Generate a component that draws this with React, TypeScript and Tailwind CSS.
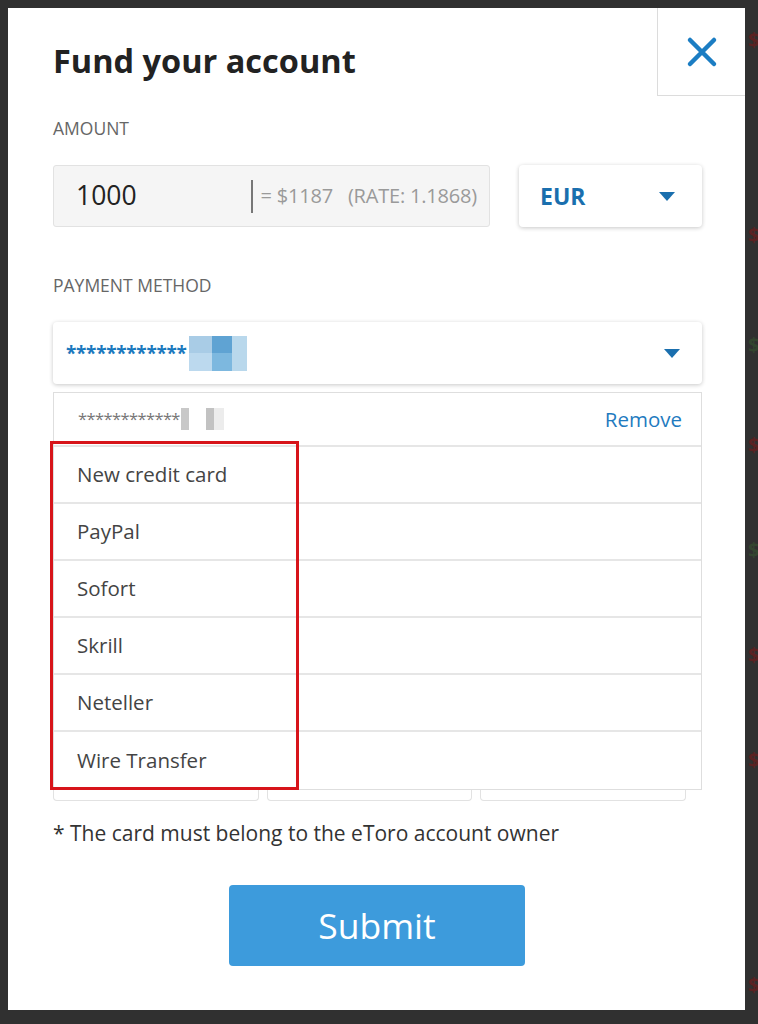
import React from "react";

const Caret = () => (
  <svg width="16" height="9" viewBox="0 0 16 9">
    <polygon points="0,0 16,0 8,9" fill="#1a6fae" />
  </svg>
);

const rows = ["New credit card", "PayPal", "Sofort", "Skrill", "Neteller", "Wire Transfer"];

const sideMarks = [
  { t: 30, c: "#5a2222" },
  { t: 225, c: "#5a2222" },
  { t: 335, c: "#33452f" },
  { t: 435, c: "#5a2222" },
  { t: 540, c: "#33452f" },
  { t: 645, c: "#5a2222" },
  { t: 750, c: "#5a2222" },
  { t: 975, c: "#5a2222" },
];

export default function App() {
  return (
    <div
      className="relative w-[758px] h-[1024px] bg-[#303030] overflow-hidden pt-[8px] pl-[8px]"
      style={{ fontFamily: '"Open Sans", "Noto Sans", sans-serif' }}
    >
      {sideMarks.map((m, i) => (
        <span
          key={i}
          className="absolute left-[748px] text-[20px] font-bold leading-none"
          style={{ top: m.t, color: m.c }}
        >
          $
        </span>
      ))}
      <div className="relative w-[737px] h-[1002px] bg-white pl-[45px] pt-[31px]">
        {/* close */}
        <div className="absolute right-0 top-0 w-[88px] h-[88px] border-l border-b border-[#dcdcdc] flex items-center justify-center">
          <svg width="32" height="32" viewBox="0 0 32 32">
            <path d="M4 4 L28 28 M28 4 L4 28" stroke="#1b7dc3" strokeWidth="4.5" strokeLinecap="round" />
          </svg>
        </div>

        <h1 className="text-[32.5px] leading-[44px] font-bold text-[#222]">Fund your account</h1>

        <div className="mt-[35px] text-[17.5px] leading-[20px] text-[#666]">AMOUNT</div>

        <div className="mt-[27px] flex w-[649px] gap-[29px]">
          <div className="w-[437px] h-[62px] bg-[#f5f5f5] border border-[#e2e2e2] rounded-[3px] flex items-center pl-[22px]">
            <span className="text-[26.5px] text-[#222] w-[175px]">1000</span>
            <span className="w-[1.5px] h-[33px] bg-[#777] mr-[8px]"></span>
            <span className="text-[20px] text-[#9a9a9a] whitespace-nowrap tracking-[-0.2px]">
              = $1187&nbsp;&nbsp;&nbsp;(RATE: 1.1868)
            </span>
          </div>
          <div className="w-[183px] h-[62px] bg-white rounded-[4px] shadow-[0_1px_4px_rgba(0,0,0,0.22)] flex items-center justify-between pl-[21px] pr-[27px]">
            <span className="text-[23px] font-bold text-[#1a6fae]">EUR</span>
            <Caret />
          </div>
        </div>

        <div className="mt-[48px] text-[17.5px] leading-[20px] text-[#666]">PAYMENT METHOD</div>

        <div className="mt-[27px] w-[649px] h-[62px] bg-white rounded-[4px] shadow-[0_1px_4px_rgba(0,0,0,0.22)] flex items-center justify-between pl-[13px] pr-[22px]">
          <div className="flex items-center">
            <span className="text-[19px] font-bold text-[#1a78bd] tracking-[-0.3px]">************</span>
            <div className="grid grid-cols-[40%_35%_25%] grid-rows-2 w-[58px] h-[35px] ml-[2px]">
              <div className="bg-[#a9cce6]"></div>
              <div className="bg-[#5fa3d3]"></div>
              <div className="bg-[#b9d8ec] row-span-2"></div>
              <div className="bg-[#bcd9ee]"></div>
              <div className="bg-[#7db8df]"></div>
            </div>
          </div>
          <Caret />
        </div>

        <div className="mt-[8px] w-[649px] border border-[#dedede] bg-white">
          <div className="h-[54px] flex items-center justify-between pl-[24px] pr-[19px] border-b-2 border-[#e6e6e6]">
            <div className="flex items-center">
              <span className="text-[16.5px] text-[#777] tracking-[-0.6px]">************</span>
              <div className="w-[8px] h-[22px] bg-[#c8c8c8] ml-[1px]"></div>
              <div className="w-[8px] h-[22px] bg-[#c2c2c2] ml-[17px]"></div>
              <div className="w-[10px] h-[22px] bg-[#ececec]"></div>
            </div>
            <span className="text-[20.5px] text-[#1f7bbf]">Remove</span>
          </div>
          {rows.map((r, i) => (
            <div
              key={r}
              className={`h-[57px] flex items-center pl-[23px] text-[20.5px] text-[#444] ${
                i < rows.length - 1 ? "border-b-2 border-[#e6e6e6]" : ""
              }`}
            >
              {r}
            </div>
          ))}
        </div>
        <div className="flex w-[633px] gap-[8px]">
          <div className="w-[206px] h-[11px] border border-t-0 border-[#e2e2e2] rounded-b-[4px]"></div>
          <div className="w-[206px] h-[11px] border border-t-0 border-[#e2e2e2] rounded-b-[4px]"></div>
          <div className="w-[206px] h-[11px] border border-t-0 border-[#e2e2e2] rounded-b-[4px]"></div>
        </div>

        <p className="mt-[18px] text-[21px] leading-[28px] text-[#333]">
          * The card must belong to the eToro account owner
        </p>

        <button className="mt-[38px] ml-[176px] w-[296px] h-[81px] bg-[#3d9bdc] rounded-[4px] text-white text-[35.5px]">
          Submit
        </button>

        {/* highlight */}
        <div className="absolute left-[42px] top-[433px] w-[249px] h-[349px] border-[3px] border-[#d7141a] pointer-events-none"></div>
      </div>
    </div>
  );
}
